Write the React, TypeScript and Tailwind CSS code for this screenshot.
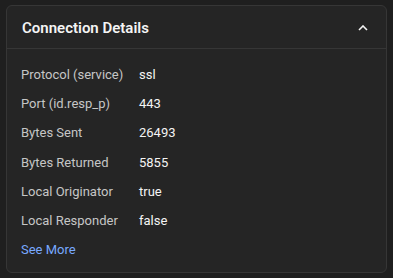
import React from 'react';

const rows = [
  { label: 'Protocol (service)', value: 'ssl' },
  { label: 'Port (id.resp_p)', value: '443' },
  { label: 'Bytes Sent', value: '26493' },
  { label: 'Bytes Returned', value: '5855' },
  { label: 'Local Originator', value: 'true' },
  { label: 'Local Responder', value: 'false' },
];

const App: React.FC = () => {
  return (
    <div className="w-[393px] h-[278px] bg-[#1f1f1f] pt-[5px] px-[6px] font-['Roboto',sans-serif]">
      <div className="h-[268px] bg-[#252525] border border-[#363636] rounded-md">
        <div className="h-[43px] flex items-center justify-between pl-[15px] pr-[18px] pt-[2px] border-b border-[#363636]">
          <h2 className="text-[15px] font-semibold text-[#f4f4f4]">Connection Details</h2>
          <svg width="10" height="6" viewBox="0 0 10 6" fill="none">
            <path d="M1 5L5 1L9 5" stroke="#f4f4f4" strokeWidth="1.6" />
          </svg>
        </div>
        <div className="pt-[11px] pl-[14px]">
          {rows.map((r) => (
            <div key={r.label} className="grid grid-cols-[118px_1fr] h-[29.25px] items-center text-[13px]">
              <span className="text-[#c6c6c6]">{r.label}</span>
              <span className="text-[#f4f4f4]">{r.value}</span>
            </div>
          ))}
          <div className="h-[29.25px] flex items-center">
            <a className="text-[13px] text-[#78a9ff]">See More</a>
          </div>
        </div>
      </div>
    </div>
  );
};

export default App;
